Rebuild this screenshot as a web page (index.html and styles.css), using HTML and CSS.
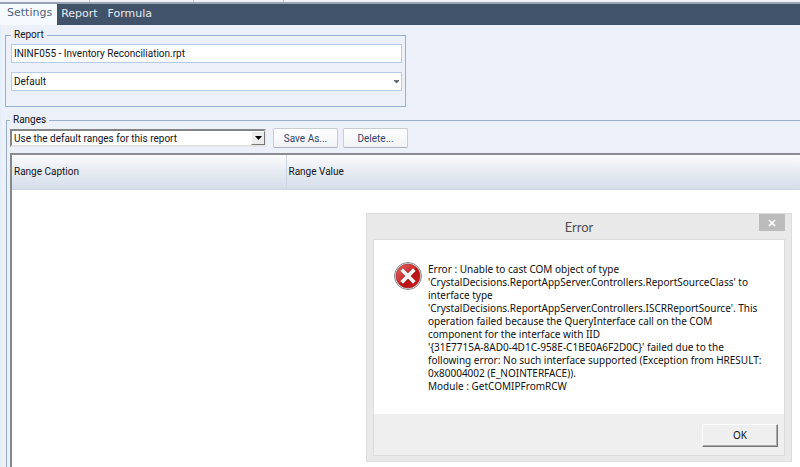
FILE: index.html
```html
<!DOCTYPE html>
<html lang="en">
<head>
<meta charset="utf-8">
<title>Report Settings</title>
<link rel="stylesheet" href="styles.css">
</head>
<body>
<div class="strip"><span></span><span class="wide"></span><span></span></div>
<nav class="tabs">
  <a class="tab active" href="#settings">Settings</a>
  <a class="tab" href="#report">Report</a>
  <a class="tab" href="#formula">Formula</a>
</nav>
<main class="page" id="settings">
  <fieldset class="group report">
    <legend>Report</legend>
    <input class="field" type="text" aria-label="Report file" value="ININF055 - Inventory Reconciliation.rpt">
    <div class="picker">
      <select class="field" aria-label="Report variant"><option>Default</option></select>
      <svg class="caret" viewBox="0 0 5 3"><path d="M0 0h5v1L3 3H2L0 1z" fill="#666e7a"/></svg>
    </div>
  </fieldset>
  <fieldset class="group ranges">
    <legend>Ranges</legend>
    <div class="toolbar">
      <div class="picker classic">
        <select aria-label="Saved ranges"><option>Use the default ranges for this report</option></select>
        <span class="drop"><svg viewBox="0 0 7 4"><path d="M0 0h7L3.500 4z" fill="#000"/></svg></span>
      </div>
      <button class="tool" type="button">Save As...</button>
      <button class="tool" type="button">Delete...</button>
    </div>
    <div class="grid">
      <table>
        <thead><tr><th class="caption">Range Caption</th><th>Range Value</th></tr></thead>
        <tbody></tbody>
      </table>
    </div>
  </fieldset>
</main>
<section class="dialog" role="alertdialog" aria-labelledby="dialog-title" aria-describedby="dialog-text">
  <header class="titlebar">
    <h1 id="dialog-title">Error</h1>
    <button class="close" type="button" aria-label="Close"><svg viewBox="0 0 8 8"><path d="M1 1l6 6M7 1L1 7" stroke="#fff" stroke-width="1.700"/></svg></button>
  </header>
  <div class="client">
    <div class="message">
      <svg class="icon" viewBox="0 0 28 28">
        <defs>
          <linearGradient id="red" x1="0" y1="0" x2="1" y2="1">
            <stop offset="0" stop-color="#e06a68"/><stop offset=".48" stop-color="#cc2d2d"/><stop offset=".52" stop-color="#b90f12"/><stop offset="1" stop-color="#c8201f"/>
          </linearGradient>
        </defs>
        <circle cx="14" cy="14" r="13.500" fill="#e4e4e4" stroke="#8c8c8c"/>
        <circle cx="14" cy="14" r="12" fill="url(#red)" stroke="#9c2929" stroke-width=".6"/>
        <path d="M9 9l10 10M19 9L9 19" stroke="#8f1515" stroke-width="5" stroke-linecap="round" opacity=".5"/>
        <path d="M9 9l10 10M19 9L9 19" stroke="#f4f4f4" stroke-width="3.800" stroke-linecap="square"/>
      </svg>
      <p id="dialog-text">Error : Unable to cast COM object of type<br>'CrystalDecisions.ReportAppServer.Controllers.ReportSourceClass' to<br>interface type<br>'CrystalDecisions.ReportAppServer.Controllers.ISCRReportSource'. This<br>operation failed because the QueryInterface call on the COM<br>component for the interface with IID<br>'{31E7715A-8AD0-4D1C-958E-C1BE0A6F2D0C}' failed due to the<br>following error: No such interface supported (Exception from HRESULT:<br>0x80004002 (E_NOINTERFACE)).<br>Module : GetCOMIPFromRCW</p>
    </div>
    <footer class="actions"><button class="ok" type="button">OK</button></footer>
  </div>
</section>
</body>
</html>
```
FILE: styles.css
```css
* { box-sizing: border-box; }
body {
  margin: 0;
  min-height: 100vh;
  display: flex;
  flex-direction: column;
  overflow: hidden;
  background: #ecf0f9;
  color: #14141c;
  font: 10px/14px Roboto, Arial, sans-serif;
}
button, input, select { font: inherit; color: inherit; margin: 0; }
.strip {
  display: flex;
  height: 4px;
  background: #eff3f8;
  border-bottom: 2px solid #9aa4b4;
}
.strip span { width: 90px; border-right: 1px solid #b9c3d6; }
.strip .wide { width: 104px; }
.tabs {
  display: flex;
  height: 21px;
  background: #41526b;
  font: 11px/20px "DejaVu Sans", Verdana, sans-serif;
}
.tab {
  padding: 0 4px;
  margin-right: 2px;
  color: #e6eaf0;
  text-decoration: none;
}
.tab.active {
  padding: 0 5px 0 7px;
  margin: 0;
  background: #f5faff;
  color: #53637e;
  line-height: 18px;
}
.page {
  flex: 1;
  display: flex;
  flex-direction: column;
  padding: 3px 0 0 4px;
  border-left: 1px solid #e2edfa;
}
.group {
  margin: 0;
  min-width: 0;
  border: 1px solid #9aaecd;
}
.group legend { padding: 0 3px; }
.report {
  width: calc(50% + 3px);
  display: flex;
  flex-direction: column;
  gap: 9px;
  padding: 2px 3px 15px 5px;
}
.field {
  display: block;
  width: 100%;
  height: 19px;
  padding: 0 2px;
  border: 1px solid #b5cce6;
  border-radius: 0;
  background: #fff;
  appearance: none;
}
.picker { position: relative; }
.caret {
  position: absolute;
  right: 3px;
  top: 8px;
  width: 5px;
  height: 3px;
}
.ranges {
  margin: 6px 0 0 1px;
  padding: 1px 0 0 3px;
  border-right: 0;
  border-bottom: 0;
}
.toolbar { display: flex; align-items: center; gap: 5px; margin-bottom: 5px; }
.classic { width: 256px; margin-right: 2px; }
.classic select {
  display: block;
  width: 100%;
  height: 18px;
  padding: 1px 2px 0;
  border: 2px solid;
  border-color: #858585 #e4e4e4 #e4e4e4 #858585;
  border-radius: 0;
  background: #fff;
  appearance: none;
}
.drop {
  position: absolute;
  inset: 2px 1px 2px auto;
  width: 14px;
  display: grid;
  place-items: center;
  background: #ececec;
  border: 1px solid;
  border-color: #fff #777 #777 #fff;
  pointer-events: none;
}
.drop svg { width: 7px; height: 4px; }
.tool {
  width: 65px;
  height: 20px;
  padding: 1px 0 0;
  border: 1px solid #c8ccd4;
  border-bottom-color: #aeb3bc;
  border-radius: 2px;
  background: linear-gradient(#fff, #f1f2f5);
  color: #35456a;
}
.grid {
  min-height: calc(100vh - 153px);
  border-top: 2px solid #8a8c8f;
  border-left: 2px solid #85878a;
  background: #fff;
}
.grid table { width: 100%; border-collapse: collapse; }
.grid th {
  height: 34px;
  padding: 1px 2px 0;
  text-align: left;
  font-weight: normal;
  border-bottom: 1px solid #cbd5e3;
  background: linear-gradient(#fbfbfd, #e8ecf2 45%, #d5deea);
}
.grid .caption { width: 274px; border-right: 1px solid #ccd5e1; }
.dialog {
  position: absolute;
  left: 366px;
  top: 213px;
  width: 426px;
  padding: 0 6px 5px;
  border: 1px solid #dcdcdc;
  background: #e9e9e9;
  font: 10px/13px "Noto Sans", "Segoe UI", sans-serif;
  color: #111;
}
.titlebar { position: relative; height: 25px; }
.titlebar h1 {
  margin: 0;
  text-align: center;
  color: #505050;
  font: 13px/26px Lato, "Segoe UI", sans-serif;
}
.close {
  position: absolute;
  top: 0;
  right: 0;
  width: 26px;
  height: 17px;
  padding: 0;
  border: 0;
  background: #bcbcbc;
  display: grid;
  place-items: center;
}
.close svg { width: 8px; height: 8px; }
.client { border: 1px solid #dcdcdc; background: #fff; }
.message { display: flex; gap: 6px; padding: 22px 20px 21px 20px; }
.message p { margin: 0; padding-top: 1px; white-space: nowrap; }
.icon { width: 28px; height: 28px; flex: none; }
.actions {
  display: flex;
  justify-content: flex-end;
  padding: 10px 6px 8px;
  background: #efefef;
}
.ok {
  width: 76px;
  height: 23px;
  padding: 0;
  border: 1px solid;
  border-color: #fff #777 #777 #fff;
  box-shadow: inset -1px -1px #aaa;
  background: #efefef;
}
```
